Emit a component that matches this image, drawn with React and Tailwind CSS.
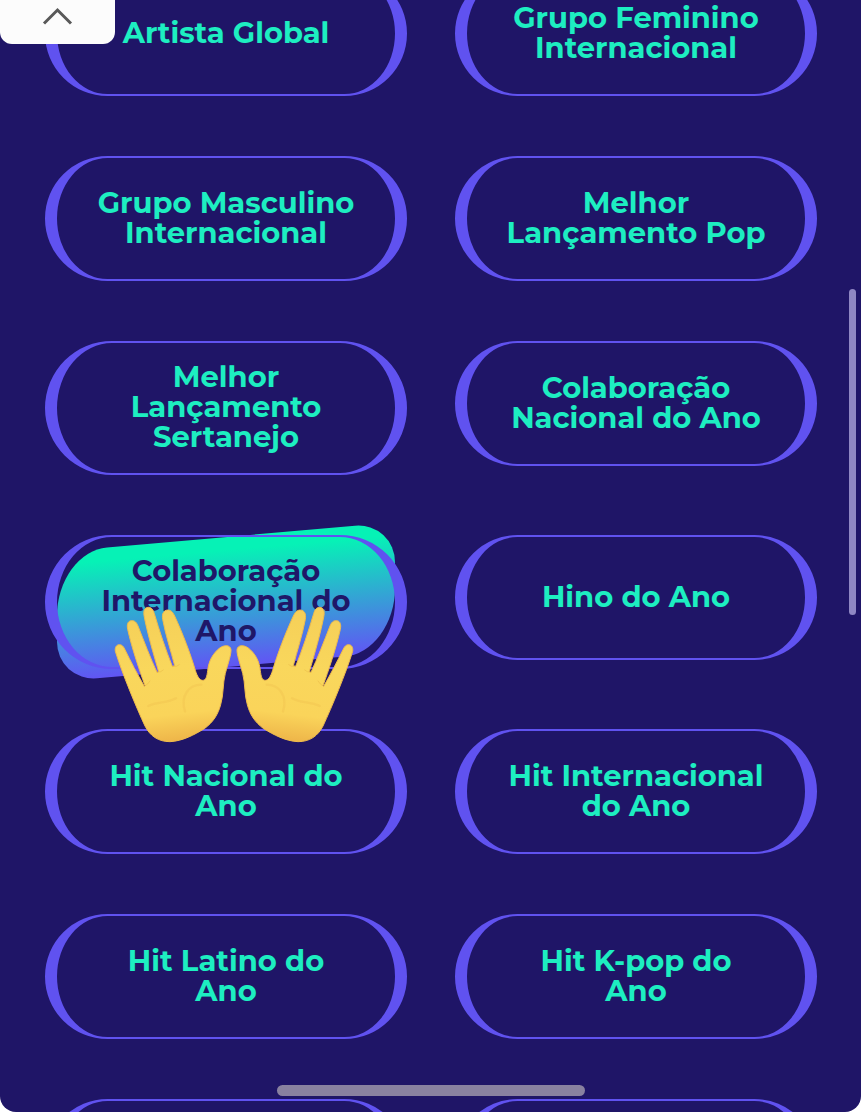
import React, { Fragment } from "react";

const categories = [
  { lines: ["Artista Global"] },
  { lines: ["Grupo Feminino", "Internacional"] },
  { lines: ["Grupo Masculino", "Internacional"] },
  { lines: ["Melhor", "Lançamento Pop"] },
  { lines: ["Melhor", "Lançamento", "Sertanejo"] },
  { lines: ["Colaboração", "Nacional do Ano"] },
  { lines: ["Colaboração", "Internacional do", "Ano"], active: true },
  { lines: ["Hino do Ano"] },
  { lines: ["Hit Nacional do", "Ano"] },
  { lines: ["Hit Internacional", "do Ano"] },
  { lines: ["Hit Latino do", "Ano"] },
  { lines: ["Hit K-pop do", "Ano"] },
];

const ring = "rounded-full border-x-[12px] border-y-2";

function Hand() {
  return (
    <g>
      <path
        d="M46 154 C44 141 50 134 58 134 C66 134 70 139 74 147 C92 184 112 222 133 259 L135 257 C119 213 96 146 83 88 C80 74 83 63 94 62 C105 61 110 68 114 78 C132 124 152 176 171 217 L176 215 C161 164 141 96 132 46 C130 31 134 23 145 22 C155 22 160 30 163 41 C178 92 198 152 217 199 L224 197 C213 154 196 102 188 58 C185 41 191 31 203 30 C213 30 219 37 224 48 C247 98 272 162 286 211 C292 230 299 241 308 241 C318 241 321 229 323 212 C326 182 339 160 359 144 C373 134 391 134 393 149 C394 163 384 191 376 220 C368 250 371 285 362 314 C354 344 339 367 313 386 C283 404 249 423 210 425 C175 425 150 408 135 378 C110 325 65 216 46 154 Z"
        fill="url(#skin)"
        stroke="#efbb4c"
        strokeWidth="3"
        strokeLinejoin="round"
      />
      <path
        d="M133 259 Q145 253 150 243 M171 217 Q184 217 190 210 M219 200 Q231 201 238 194"
        fill="none"
        stroke="#d89b32"
        strokeWidth="2"
        strokeLinecap="round"
        opacity="0.4"
      />
      <path
        d="M304 254 C268 254 240 286 255 334 M145 318 C174 303 200 311 228 295"
        fill="none"
        stroke="#e9b243"
        strokeWidth="7"
        strokeLinecap="round"
        opacity="0.22"
      />
    </g>
  );
}

function RaisedHands() {
  return (
    <svg
      viewBox="0 0 804 450"
      role="img"
      aria-label="Mãos abertas"
      className="pointer-events-none absolute left-[43px] top-[63px] z-10 h-[150px] w-[268px]"
    >
      <defs>
        <linearGradient id="skin" x1="0.4" y1="0" x2="0.5" y2="1">
          <stop offset="0" stopColor="#f5cf58" />
          <stop offset="0.45" stopColor="#f9d75c" />
          <stop offset="0.8" stopColor="#fad45a" />
          <stop offset="1" stopColor="#eeb549" />
        </linearGradient>
      </defs>
      <Hand />
      <g transform="translate(804 0) scale(-1 1)">
        <Hand />
      </g>
    </svg>
  );
}

function CategoryButton({ lines, active }) {
  return (
    <button
      type="button"
      aria-pressed={Boolean(active)}
      className={`${ring} relative flex min-h-[125px] w-full items-center justify-center whitespace-nowrap pb-[21px] pt-[19px] text-center text-[29px] font-bold leading-[30px] ${
        active
          ? "isolate border-transparent text-[#1f1768]"
          : "border-[#6052f0] text-[#1deec1]"
      }`}
    >
      {active && (
        <>
          <span className="absolute inset-0 -z-10 -skew-y-[5deg] rounded-[50px_40px_50px_40px/64px_40px_64px_40px] bg-linear-to-b/srgb from-[#06f2b6] from-10% to-[#6155f4] to-100%" />
          <span
            className={`${ring} absolute -inset-x-3 -inset-y-0.5 -z-10 border-[#6052f0]`}
          />
        </>
      )}
      <span>
        {lines.map((line, index) => (
          <Fragment key={line}>
            {index > 0 && <br />}
            {line}
          </Fragment>
        ))}
      </span>
      {active && <RaisedHands />}
    </button>
  );
}

export default function App() {
  return (
    <div className="h-dvh bg-white font-['Montserrat','Inter',sans-serif]">
      <main className="relative h-full overflow-hidden rounded-b-2xl bg-[#1f1567]">
        <ul className="-mt-[29px] grid grid-cols-2 items-start gap-x-12 gap-y-[60px] pl-[45px] pr-11">
          {categories.map((category) => (
            <li
              key={category.lines.join(" ")}
              className={category.active ? "relative z-10" : ""}
            >
              <CategoryButton {...category} />
            </li>
          ))}
          <li
            aria-hidden="true"
            className={`${ring} min-h-[125px] border-[#6052f0]`}
          />
          <li
            aria-hidden="true"
            className={`${ring} min-h-[125px] border-[#6052f0]`}
          />
        </ul>

        <button
          type="button"
          aria-label="Recolher"
          className="absolute left-0 top-0 z-20 flex h-11 w-[115px] justify-center rounded-b-xl bg-[#fcfcfc] pt-1"
        >
          <svg
            viewBox="0 0 32 24"
            fill="none"
            stroke="#595959"
            strokeWidth="3"
            className="h-6 w-8"
          >
            <path d="M2 19.5 L15.500 6 L29 19.500" />
          </svg>
        </button>

        <div className="absolute right-[5px] top-[26%] z-20 h-[326px] w-[7px] rounded-full bg-[#8f87c3]" />
        <div className="absolute bottom-4 left-1/2 z-20 h-[11px] w-[308px] -translate-x-1/2 rounded-full bg-[#8981a0]" />
      </main>
    </div>
  );
}
